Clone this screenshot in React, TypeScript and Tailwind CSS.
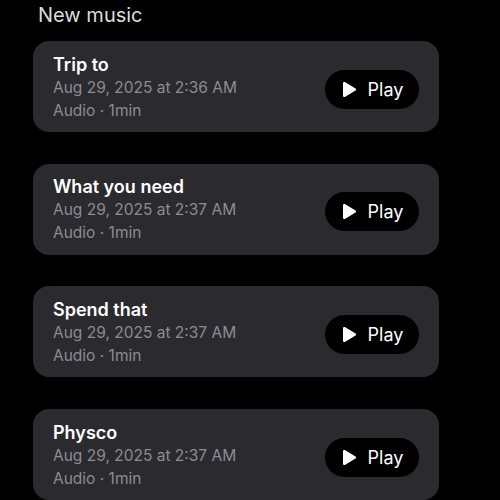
import React from 'react';

type Track = { title: string; date: string; kind: string; length: string };

const TRACKS: Track[] = [
  { title: 'Trip to', date: 'Aug 29, 2025 at 2:36 AM', kind: 'Audio', length: '1min' },
  { title: 'What you need', date: 'Aug 29, 2025 at 2:37 AM', kind: 'Audio', length: '1min' },
  { title: 'Spend that', date: 'Aug 29, 2025 at 2:37 AM', kind: 'Audio', length: '1min' },
  { title: 'Physco', date: 'Aug 29, 2025 at 2:37 AM', kind: 'Audio', length: '1min' },
];

const PlayIcon: React.FC = () => (
  <svg width="16" height="17" viewBox="0 0 16 17" fill="white">
    <path d="M2 2.2c0-1 1-1.6 1.9-1.1l10.6 6.3c.8.5.8 1.7 0 2.2L3.9 15.9C3 16.4 2 15.8 2 14.8z" />
  </svg>
);

const TrackCard: React.FC<{ track: Track }> = ({ track }) => (
  <div className="w-[406px] h-[91px] rounded-[16px] bg-[#2b2a2f] pl-5 pr-5 flex items-center justify-between">
    <div className="flex flex-col mt-[2px]">
      <span className="text-[18px] leading-[22px] font-semibold text-white">{track.title}</span>
      <span className="text-[15.5px] leading-[24px] text-[#8d8c92]">{track.date}</span>
      <span className="text-[15.5px] leading-[22px] text-[#8d8c92]">
        {track.kind} · {track.length}
      </span>
    </div>
    <button className="mt-[5px] w-[94px] h-[39px] rounded-full bg-black flex items-center justify-center gap-[11px]">
      <PlayIcon />
      <span className="text-[18px] text-white">Play</span>
    </button>
  </div>
);

export default function App() {
  return (
    <div
      className="w-[500px] h-[500px] overflow-hidden bg-black pl-[33px]"
      style={{ fontFamily: 'Inter, "Liberation Sans", sans-serif' }}
    >
      <h1 className="pl-[5px] pt-[3px] text-[20px] leading-[24px] text-[#dcdcdc]">New music</h1>
      <div className="mt-[14px] flex flex-col gap-[31.7px]">
        {TRACKS.map(t => (
          <TrackCard key={t.title} track={t} />
        ))}
      </div>
    </div>
  );
}
